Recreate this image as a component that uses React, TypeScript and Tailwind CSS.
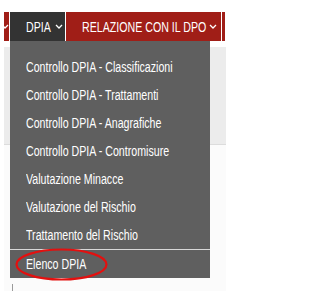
import React from 'react';

const font = { fontFamily: '"Liberation Sans", Arial, sans-serif' };

const Chevron = ({ className = '' }: { className?: string }) => (
  <svg width="8" height="5" viewBox="0 0 8 5" className={`shrink-0 ${className}`}>
    <path d="M1 1 L4 4 L7 1" fill="none" stroke="white" strokeWidth="1.3" />
  </svg>
);

// Arial Narrow look: Liberation Sans squeezed horizontally
const Narrow = ({ children, w }: { children: React.ReactNode; w: string }) => (
  <span className={`shrink-0 ${w}`}>
    <span className="inline-block whitespace-nowrap origin-left scale-x-[0.76]">{children}</span>
  </span>
);

const items = [
  'Controllo DPIA - Classificazioni',
  'Controllo DPIA - Trattamenti',
  'Controllo DPIA - Anagrafiche',
  'Controllo DPIA - Contromisure',
  'Valutazione Minacce',
  'Valutazione del Rischio',
  'Trattamento del Rischio',
];

export default function App() {
  return (
    <div className="relative w-[234px] h-[291px] bg-white overflow-hidden" style={font}>
      {/* nav bar */}
      <div className="flex h-[29px] mt-[12px] text-[14px] leading-none text-white">
        {/* previous menu item, cut off at the left */}
        <div className="flex items-center w-[5px] ml-[4px] bg-[#a01e17] overflow-hidden">
          <svg width="8" height="5" viewBox="0 0 8 5" className="shrink-0 ml-[-3px]">
            <path d="M1 1 L4 4 L7 1" fill="none" stroke="white" strokeWidth="1.3" />
          </svg>
        </div>
        <div className="w-px" />
        <div className="flex items-center w-[55px] pl-[16px] pr-[2px] bg-[#333333]">
          <Narrow w="w-[26px]">DPIA</Narrow>
          <Chevron className="ml-auto" />
        </div>
        <div className="w-px" />
        <div className="flex items-center w-[155px] pl-[16px] pr-[4px] bg-[#a01e17]">
          <Narrow w="w-[122px]">RELAZIONE CON IL DPO</Narrow>
          <Chevron className="ml-auto" />
        </div>
        <div className="w-px" />
        <div className="w-[3px] bg-[#a01e17]" />
      </div>

      {/* page behind */}
      <div className="ml-[4px] w-[222px] mt-[6px] h-[98px] bg-[#ececec] border-b border-[#dcdcdc]" />
      <div className="ml-[4px] w-[222px] h-[150px] bg-[#fbfbfb]" />
      <div className="absolute left-[12px] top-[284px] w-px h-[7px] bg-[#9a9a9a]" />

      {/* dropdown */}
      <div className="absolute left-[10px] top-[41px] w-[200px] pt-[12px] bg-[#5f5f5f] text-[14px] leading-none text-white">
        {items.map((t) => (
          <div key={t} className="h-[28px] flex items-center pl-[16px]">
            <Narrow w="w-[170px]">{t}</Narrow>
          </div>
        ))}
        <div className="h-px bg-[#d8d8d8]" />
        <div className="relative h-[28px] flex items-center pl-[16px]">
          <Narrow w="w-[70px]">Elenco DPIA</Narrow>
          <svg className="absolute left-[5px] top-[-2px]" width="93" height="33" viewBox="0 0 93 33">
            <ellipse cx="46.5" cy="16.5" rx="45" ry="15" fill="none" stroke="#e3100f" strokeWidth="2.2" />
          </svg>
        </div>
      </div>
    </div>
  );
}
